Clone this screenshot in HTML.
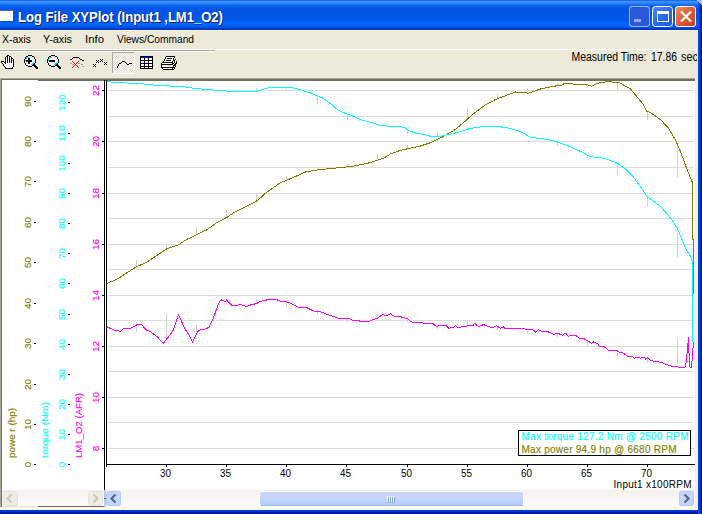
<!DOCTYPE html><html><head><meta charset="utf-8"><title>Log File XYPlot</title><style>html,body{margin:0;padding:0;overflow:hidden;background:#ECE9D8}svg{display:block}text{font-family:"Liberation Sans",sans-serif}.th{stroke-width:0.3px;paint-order:stroke}</style></head><body>
<svg width="702" height="514" viewBox="0 0 702 514">
<defs>
<linearGradient id="tb" x1="0" y1="0" x2="0" y2="30" gradientUnits="userSpaceOnUse">
<stop offset="0" stop-color="#0A46D8"/><stop offset="0.04" stop-color="#3D93FF"/><stop offset="0.1" stop-color="#2D86FA"/>
<stop offset="0.2" stop-color="#0760EE"/><stop offset="0.3" stop-color="#0055E3"/><stop offset="0.65" stop-color="#0056E6"/>
<stop offset="0.78" stop-color="#0066FE"/><stop offset="0.86" stop-color="#0062F8"/><stop offset="0.93" stop-color="#0048DA"/><stop offset="1" stop-color="#0030C0"/>
</linearGradient>
<linearGradient id="rb" x1="698" y1="0" x2="702" y2="0" gradientUnits="userSpaceOnUse">
<stop offset="0" stop-color="#0050F0"/><stop offset="0.45" stop-color="#0040D0"/><stop offset="0.75" stop-color="#00189A"/><stop offset="1" stop-color="#00108A"/>
</linearGradient>
<linearGradient id="bb" x1="0" y1="510" x2="0" y2="514" gradientUnits="userSpaceOnUse">
<stop offset="0" stop-color="#0040EE"/><stop offset="0.45" stop-color="#0030C8"/><stop offset="0.75" stop-color="#00189A"/><stop offset="1" stop-color="#00108A"/>
</linearGradient>
<linearGradient id="closeg" x1="0" y1="0" x2="1" y2="1">
<stop offset="0" stop-color="#F0906A"/><stop offset="0.5" stop-color="#E25A30"/><stop offset="1" stop-color="#C8401E"/>
</linearGradient>
<linearGradient id="btng" x1="0" y1="0" x2="1" y2="1">
<stop offset="0" stop-color="#4C8BF5"/><stop offset="0.5" stop-color="#2A6AEF"/><stop offset="1" stop-color="#1F58E0"/>
</linearGradient>
<linearGradient id="sbg" x1="0" y1="0" x2="0" y2="1">
<stop offset="0" stop-color="#F3F1EC"/><stop offset="1" stop-color="#FEFEFB"/>
</linearGradient>
<linearGradient id="thumbg" x1="0" y1="0" x2="0" y2="1">
<stop offset="0" stop-color="#C9D6FB"/><stop offset="0.6" stop-color="#C4D3FA"/><stop offset="1" stop-color="#B0C8F8"/>
</linearGradient>
<pattern id="dith" width="2" height="2" patternUnits="userSpaceOnUse"><rect width="2" height="2" fill="#F8F7F2"/><rect width="1" height="1" fill="#E2DFD2"/><rect x="1" y="1" width="1" height="1" fill="#E2DFD2"/></pattern>
<clipPath id="plotclip"><rect x="105" y="80" width="590" height="410"/></clipPath>
</defs>
<rect x="0" y="0" width="702" height="514" fill="#ECE9D8" />
<rect x="0" y="0" width="698" height="30" fill="url(#tb)" />
<path d="M690,0 L702,0 L702,30 L698,30 L698,6 Q698,0 690,0 Z" fill="url(#tb)"/>
<rect x="698" y="0" width="4" height="514" fill="url(#rb)" />
<path d="M694,0 Q702,0 702,8 L702,0 Z" fill="#ECE9D8" opacity="0"/>
<rect x="0" y="510" width="698" height="4" fill="url(#bb)" />
<rect x="0" y="507" width="698" height="3" fill="#FBF8EA" />
<path d="M697,0 L702,0 L702,5 L701,5 L701,4 L700,4 L700,3 L699,3 L699,2 L698,2 L698,1 L697,1 Z" fill="#A9B9DA"/>
<rect x="0" y="10" width="12" height="1" fill="#3C6CC8" />
<rect x="0" y="11" width="13" height="10" fill="#FDFDF5" />
<rect x="13" y="10" width="1" height="11" fill="#1A3CA8" opacity="0.5"/>
<rect x="0" y="21" width="14" height="1" fill="#1A3CA8" opacity="0.5"/>
<rect x="12" y="10" width="1" height="1" fill="#FF6A3A" />
<text x="19.1" y="23" font-size="14" fill="#0A1E78" font-weight="bold" text-anchor="start" textLength="204.8" lengthAdjust="spacingAndGlyphs" >Log File XYPlot (Input1 ,LM1_O2)</text>
<text x="18.1" y="22" font-size="14" fill="#FFFFFF" font-weight="bold" text-anchor="start" textLength="204.8" lengthAdjust="spacingAndGlyphs" >Log File XYPlot (Input1 ,LM1_O2)</text>
<rect x="629.5" y="6.5" width="20" height="20" rx="3" fill="url(#btng)" stroke="#FFFFFF" stroke-width="1"/>
<rect x="629.5" y="6.5" width="20" height="20" rx="3" fill="#2A58DA" stroke="#9DB5F0" stroke-width="1"/>
<rect x="634" y="19" width="7" height="3" fill="#9AA8E6" />
<rect x="652.5" y="6.5" width="20" height="20" rx="3" fill="url(#btng)" stroke="#FFFFFF" stroke-width="1"/>
<rect x="657.5" y="11.5" width="11" height="10" fill="none" stroke="#FFFFFF" stroke-width="1"/>
<rect x="657" y="11" width="12" height="3" fill="#FFFFFF" />
<rect x="675.5" y="6.5" width="20" height="20" rx="2.5" fill="url(#closeg)" stroke="#FFFFFF" stroke-width="1"/>
<path d="M681,11.5 L691,21.5 M691,11.5 L681,21.5" stroke="#FFFFFF" stroke-width="2.2" />
<rect x="0" y="30" width="698" height="1" fill="#FAF7E8" />
<text x="2" y="43" font-size="11" fill="#000000" font-weight="normal" text-anchor="start" textLength="29" lengthAdjust="spacingAndGlyphs" >X-axis</text>
<text x="43" y="43" font-size="11" fill="#000000" font-weight="normal" text-anchor="start" textLength="29" lengthAdjust="spacingAndGlyphs" >Y-axis</text>
<text x="85" y="43" font-size="11" fill="#000000" font-weight="normal" text-anchor="start" textLength="19" lengthAdjust="spacingAndGlyphs" >Info</text>
<text x="117" y="43" font-size="11" fill="#000000" font-weight="normal" text-anchor="start" textLength="77" lengthAdjust="spacingAndGlyphs" >Views/Command</text>
<rect x="0" y="49" width="697" height="1" fill="#FFFFFF" />
<rect x="0" y="50" width="215" height="1" fill="#ACA899" />
<rect x="0" y="51" width="215" height="1" fill="#FFFFFF" />
<rect x="7" y="55" width="2" height="1" fill="#000000" />
<rect x="6" y="56" width="2" height="1" fill="#000000" />
<rect x="8" y="56" width="1" height="1" fill="#FFFFFF" />
<rect x="9" y="56" width="2" height="1" fill="#000000" />
<rect x="5" y="57" width="1" height="1" fill="#000000" />
<rect x="6" y="57" width="1" height="1" fill="#FFFFFF" />
<rect x="7" y="57" width="1" height="1" fill="#000000" />
<rect x="8" y="57" width="1" height="1" fill="#FFFFFF" />
<rect x="9" y="57" width="1" height="1" fill="#000000" />
<rect x="10" y="57" width="1" height="1" fill="#FFFFFF" />
<rect x="11" y="57" width="1" height="1" fill="#000000" />
<rect x="5" y="58" width="1" height="1" fill="#000000" />
<rect x="6" y="58" width="1" height="1" fill="#FFFFFF" />
<rect x="7" y="58" width="1" height="1" fill="#000000" />
<rect x="8" y="58" width="1" height="1" fill="#FFFFFF" />
<rect x="9" y="58" width="1" height="1" fill="#000000" />
<rect x="10" y="58" width="1" height="1" fill="#FFFFFF" />
<rect x="11" y="58" width="2" height="1" fill="#000000" />
<rect x="5" y="59" width="1" height="1" fill="#000000" />
<rect x="6" y="59" width="1" height="1" fill="#FFFFFF" />
<rect x="7" y="59" width="1" height="1" fill="#000000" />
<rect x="8" y="59" width="1" height="1" fill="#FFFFFF" />
<rect x="9" y="59" width="1" height="1" fill="#000000" />
<rect x="10" y="59" width="1" height="1" fill="#FFFFFF" />
<rect x="11" y="59" width="1" height="1" fill="#000000" />
<rect x="12" y="59" width="1" height="1" fill="#FFFFFF" />
<rect x="13" y="59" width="1" height="1" fill="#000000" />
<rect x="5" y="60" width="1" height="1" fill="#000000" />
<rect x="6" y="60" width="1" height="1" fill="#FFFFFF" />
<rect x="7" y="60" width="1" height="1" fill="#000000" />
<rect x="8" y="60" width="1" height="1" fill="#FFFFFF" />
<rect x="9" y="60" width="1" height="1" fill="#000000" />
<rect x="10" y="60" width="1" height="1" fill="#FFFFFF" />
<rect x="11" y="60" width="1" height="1" fill="#000000" />
<rect x="12" y="60" width="1" height="1" fill="#FFFFFF" />
<rect x="13" y="60" width="1" height="1" fill="#000000" />
<rect x="1" y="61" width="3" height="1" fill="#000000" />
<rect x="5" y="61" width="1" height="1" fill="#000000" />
<rect x="6" y="61" width="1" height="1" fill="#FFFFFF" />
<rect x="7" y="61" width="1" height="1" fill="#000000" />
<rect x="8" y="61" width="1" height="1" fill="#FFFFFF" />
<rect x="9" y="61" width="1" height="1" fill="#000000" />
<rect x="10" y="61" width="1" height="1" fill="#FFFFFF" />
<rect x="11" y="61" width="1" height="1" fill="#000000" />
<rect x="12" y="61" width="1" height="1" fill="#FFFFFF" />
<rect x="13" y="61" width="1" height="1" fill="#000000" />
<rect x="1" y="62" width="1" height="1" fill="#000000" />
<rect x="2" y="62" width="2" height="1" fill="#FFFFFF" />
<rect x="4" y="62" width="2" height="1" fill="#000000" />
<rect x="6" y="62" width="1" height="1" fill="#FFFFFF" />
<rect x="7" y="62" width="1" height="1" fill="#000000" />
<rect x="8" y="62" width="1" height="1" fill="#FFFFFF" />
<rect x="9" y="62" width="1" height="1" fill="#000000" />
<rect x="10" y="62" width="1" height="1" fill="#FFFFFF" />
<rect x="11" y="62" width="1" height="1" fill="#000000" />
<rect x="12" y="62" width="1" height="1" fill="#FFFFFF" />
<rect x="13" y="62" width="1" height="1" fill="#000000" />
<rect x="2" y="63" width="1" height="1" fill="#000000" />
<rect x="3" y="63" width="2" height="1" fill="#FFFFFF" />
<rect x="5" y="63" width="1" height="1" fill="#000000" />
<rect x="6" y="63" width="7" height="1" fill="#FFFFFF" />
<rect x="13" y="63" width="1" height="1" fill="#000000" />
<rect x="3" y="64" width="1" height="1" fill="#000000" />
<rect x="4" y="64" width="9" height="1" fill="#FFFFFF" />
<rect x="13" y="64" width="1" height="1" fill="#000000" />
<rect x="3" y="65" width="1" height="1" fill="#000000" />
<rect x="4" y="65" width="9" height="1" fill="#FFFFFF" />
<rect x="13" y="65" width="1" height="1" fill="#000000" />
<rect x="4" y="66" width="1" height="1" fill="#000000" />
<rect x="5" y="66" width="8" height="1" fill="#FFFFFF" />
<rect x="13" y="66" width="1" height="1" fill="#000000" />
<rect x="5" y="67" width="1" height="1" fill="#000000" />
<rect x="6" y="67" width="6" height="1" fill="#FFFFFF" />
<rect x="12" y="67" width="1" height="1" fill="#000000" />
<rect x="5" y="68" width="8" height="1" fill="#000000" />
<rect x="28" y="55" width="4" height="1" fill="#000000" />
<rect x="26" y="56" width="2" height="1" fill="#000000" />
<rect x="32" y="56" width="2" height="1" fill="#000000" />
<rect x="25" y="57" width="1" height="1" fill="#000000" />
<rect x="26" y="57" width="3" height="1" fill="#00E0F0" />
<rect x="29" y="57" width="1" height="1" fill="#FFFFFF" />
<rect x="33" y="57" width="1" height="1" fill="#FFFFFF" />
<rect x="34" y="57" width="1" height="1" fill="#000000" />
<rect x="25" y="58" width="1" height="1" fill="#000000" />
<rect x="26" y="58" width="1" height="1" fill="#00E0F0" />
<rect x="27" y="58" width="1" height="1" fill="#FFFFFF" />
<rect x="28" y="58" width="2" height="1" fill="#000000" />
<rect x="30" y="58" width="4" height="1" fill="#FFFFFF" />
<rect x="34" y="58" width="1" height="1" fill="#000000" />
<rect x="24" y="59" width="1" height="1" fill="#000000" />
<rect x="25" y="59" width="1" height="1" fill="#00E0F0" />
<rect x="26" y="59" width="2" height="1" fill="#FFFFFF" />
<rect x="28" y="59" width="2" height="1" fill="#000000" />
<rect x="30" y="59" width="5" height="1" fill="#FFFFFF" />
<rect x="35" y="59" width="1" height="1" fill="#000000" />
<rect x="24" y="60" width="1" height="1" fill="#000000" />
<rect x="25" y="60" width="1" height="1" fill="#00E0F0" />
<rect x="26" y="60" width="6" height="1" fill="#000000" />
<rect x="32" y="60" width="3" height="1" fill="#FFFFFF" />
<rect x="35" y="60" width="1" height="1" fill="#000000" />
<rect x="24" y="61" width="1" height="1" fill="#000000" />
<rect x="25" y="61" width="1" height="1" fill="#FFFFFF" />
<rect x="26" y="61" width="6" height="1" fill="#000000" />
<rect x="32" y="61" width="3" height="1" fill="#FFFFFF" />
<rect x="35" y="61" width="1" height="1" fill="#000000" />
<rect x="24" y="62" width="1" height="1" fill="#000000" />
<rect x="25" y="62" width="3" height="1" fill="#FFFFFF" />
<rect x="28" y="62" width="2" height="1" fill="#000000" />
<rect x="30" y="62" width="3" height="1" fill="#FFFFFF" />
<rect x="33" y="62" width="1" height="1" fill="#00E0F0" />
<rect x="34" y="62" width="1" height="1" fill="#FFFFFF" />
<rect x="35" y="62" width="1" height="1" fill="#000000" />
<rect x="25" y="63" width="1" height="1" fill="#000000" />
<rect x="26" y="63" width="2" height="1" fill="#FFFFFF" />
<rect x="28" y="63" width="2" height="1" fill="#000000" />
<rect x="30" y="63" width="2" height="1" fill="#FFFFFF" />
<rect x="32" y="63" width="2" height="1" fill="#00E0F0" />
<rect x="34" y="63" width="1" height="1" fill="#000000" />
<rect x="25" y="64" width="1" height="1" fill="#000000" />
<rect x="26" y="64" width="5" height="1" fill="#FFFFFF" />
<rect x="31" y="64" width="2" height="1" fill="#00E0F0" />
<rect x="33" y="64" width="2" height="1" fill="#000000" />
<rect x="26" y="65" width="2" height="1" fill="#000000" />
<rect x="32" y="65" width="4" height="1" fill="#000000" />
<rect x="28" y="66" width="4" height="1" fill="#000000" />
<rect x="34" y="66" width="3" height="1" fill="#000000" />
<rect x="35" y="67" width="3" height="1" fill="#000000" />
<rect x="36" y="68" width="2" height="1" fill="#000000" />
<rect x="51" y="55" width="4" height="1" fill="#000000" />
<rect x="49" y="56" width="2" height="1" fill="#000000" />
<rect x="55" y="56" width="2" height="1" fill="#000000" />
<rect x="48" y="57" width="1" height="1" fill="#000000" />
<rect x="49" y="57" width="3" height="1" fill="#00E0F0" />
<rect x="52" y="57" width="1" height="1" fill="#FFFFFF" />
<rect x="56" y="57" width="1" height="1" fill="#FFFFFF" />
<rect x="57" y="57" width="1" height="1" fill="#000000" />
<rect x="48" y="58" width="1" height="1" fill="#000000" />
<rect x="49" y="58" width="1" height="1" fill="#00E0F0" />
<rect x="50" y="58" width="7" height="1" fill="#FFFFFF" />
<rect x="57" y="58" width="1" height="1" fill="#000000" />
<rect x="47" y="59" width="1" height="1" fill="#000000" />
<rect x="48" y="59" width="1" height="1" fill="#00E0F0" />
<rect x="49" y="59" width="9" height="1" fill="#FFFFFF" />
<rect x="58" y="59" width="1" height="1" fill="#000000" />
<rect x="47" y="60" width="1" height="1" fill="#000000" />
<rect x="48" y="60" width="1" height="1" fill="#00E0F0" />
<rect x="49" y="60" width="6" height="1" fill="#000000" />
<rect x="55" y="60" width="3" height="1" fill="#FFFFFF" />
<rect x="58" y="60" width="1" height="1" fill="#000000" />
<rect x="47" y="61" width="1" height="1" fill="#000000" />
<rect x="48" y="61" width="1" height="1" fill="#FFFFFF" />
<rect x="49" y="61" width="6" height="1" fill="#000000" />
<rect x="55" y="61" width="3" height="1" fill="#FFFFFF" />
<rect x="58" y="61" width="1" height="1" fill="#000000" />
<rect x="47" y="62" width="1" height="1" fill="#000000" />
<rect x="48" y="62" width="8" height="1" fill="#FFFFFF" />
<rect x="56" y="62" width="1" height="1" fill="#00E0F0" />
<rect x="57" y="62" width="1" height="1" fill="#FFFFFF" />
<rect x="58" y="62" width="1" height="1" fill="#000000" />
<rect x="48" y="63" width="1" height="1" fill="#000000" />
<rect x="49" y="63" width="6" height="1" fill="#FFFFFF" />
<rect x="55" y="63" width="2" height="1" fill="#00E0F0" />
<rect x="57" y="63" width="1" height="1" fill="#000000" />
<rect x="48" y="64" width="1" height="1" fill="#000000" />
<rect x="49" y="64" width="5" height="1" fill="#FFFFFF" />
<rect x="54" y="64" width="2" height="1" fill="#00E0F0" />
<rect x="56" y="64" width="2" height="1" fill="#000000" />
<rect x="49" y="65" width="2" height="1" fill="#000000" />
<rect x="55" y="65" width="4" height="1" fill="#000000" />
<rect x="51" y="66" width="4" height="1" fill="#000000" />
<rect x="57" y="66" width="3" height="1" fill="#000000" />
<rect x="58" y="67" width="3" height="1" fill="#000000" />
<rect x="59" y="68" width="2" height="1" fill="#000000" />
<rect x="73" y="57" width="6" height="1" fill="#000000" />
<rect x="72" y="58" width="1" height="1" fill="#000000" />
<rect x="79" y="58" width="1" height="1" fill="#000000" />
<rect x="70" y="59" width="2" height="1" fill="#000000" />
<rect x="80" y="59" width="2" height="1" fill="#000000" />
<rect x="82" y="60" width="2" height="1" fill="#000000" />
<rect x="72" y="61" width="1" height="1" fill="#FF0000" />
<rect x="78" y="61" width="1" height="1" fill="#FF0000" />
<rect x="73" y="62" width="1" height="1" fill="#FF0000" />
<rect x="77" y="62" width="1" height="1" fill="#FF0000" />
<rect x="70" y="63" width="2" height="1" fill="#A0A098" />
<rect x="74" y="63" width="1" height="1" fill="#FF0000" />
<rect x="76" y="63" width="1" height="1" fill="#FF0000" />
<rect x="78" y="63" width="2" height="1" fill="#A0A098" />
<rect x="72" y="64" width="2" height="1" fill="#A0A098" />
<rect x="75" y="64" width="1" height="1" fill="#FF0000" />
<rect x="81" y="64" width="2" height="1" fill="#A0A098" />
<rect x="74" y="65" width="1" height="1" fill="#FF0000" />
<rect x="76" y="65" width="1" height="1" fill="#FF0000" />
<rect x="73" y="66" width="1" height="1" fill="#FF0000" />
<rect x="77" y="66" width="1" height="1" fill="#FF0000" />
<rect x="82" y="66" width="2" height="1" fill="#A0A098" />
<rect x="72" y="67" width="1" height="1" fill="#FF0000" />
<rect x="78" y="67" width="1" height="1" fill="#FF0000" />
<rect x="93" y="64" width="1" height="1" fill="#000" />
<rect x="95" y="64" width="1" height="1" fill="#000" />
<rect x="94" y="65" width="1" height="1" fill="#000" />
<rect x="93" y="66" width="1" height="1" fill="#000" />
<rect x="95" y="66" width="1" height="1" fill="#000" />
<rect x="96" y="60" width="1" height="1" fill="#000" />
<rect x="98" y="60" width="1" height="1" fill="#000" />
<rect x="97" y="61" width="1" height="1" fill="#000" />
<rect x="96" y="62" width="1" height="1" fill="#000" />
<rect x="98" y="62" width="1" height="1" fill="#000" />
<rect x="100" y="59" width="1" height="1" fill="#000" />
<rect x="102" y="59" width="1" height="1" fill="#000" />
<rect x="101" y="60" width="1" height="1" fill="#000" />
<rect x="100" y="61" width="1" height="1" fill="#000" />
<rect x="102" y="61" width="1" height="1" fill="#000" />
<rect x="104" y="62" width="1" height="1" fill="#000" />
<rect x="106" y="62" width="1" height="1" fill="#000" />
<rect x="105" y="63" width="1" height="1" fill="#000" />
<rect x="104" y="64" width="1" height="1" fill="#000" />
<rect x="106" y="64" width="1" height="1" fill="#000" />
<rect x="112" y="52" width="23" height="22" fill="url(#dith)" />
<rect x="112" y="52" width="22" height="1" fill="#ACA899" />
<rect x="112" y="52" width="1" height="21" fill="#ACA899" />
<rect x="112" y="73" width="23" height="1" fill="#FFFFFF" />
<rect x="134" y="56" width="1" height="13" fill="#FFFFFF" />
<rect x="122" y="61" width="3" height="1" fill="#000000" />
<rect x="121" y="62" width="1" height="1" fill="#000000" />
<rect x="125" y="62" width="1" height="1" fill="#000000" />
<rect x="119" y="63" width="2" height="1" fill="#000000" />
<rect x="126" y="63" width="1" height="1" fill="#000000" />
<rect x="129" y="63" width="3" height="1" fill="#000000" />
<rect x="118" y="64" width="1" height="1" fill="#000000" />
<rect x="127" y="64" width="2" height="1" fill="#000000" />
<rect x="118" y="65" width="1" height="1" fill="#000000" />
<rect x="117" y="66" width="1" height="1" fill="#000000" />
<rect x="117" y="67" width="1" height="1" fill="#000000" />
<rect x="140" y="56" width="13" height="13" fill="#000" />
<rect x="141" y="57" width="7" height="1" fill="#0000FF" />
<rect x="149" y="57" width="3" height="1" fill="#0000FF" />
<rect x="141" y="58" width="3" height="2" fill="#FFFFFF" />
<rect x="145" y="58" width="3" height="2" fill="#FFFFFF" />
<rect x="149" y="58" width="3" height="2" fill="#FFFFFF" />
<rect x="141" y="61" width="3" height="2" fill="#FFFFFF" />
<rect x="145" y="61" width="3" height="2" fill="#FFFFFF" />
<rect x="149" y="61" width="3" height="2" fill="#FFFFFF" />
<rect x="141" y="64" width="3" height="2" fill="#FFFFFF" />
<rect x="145" y="64" width="3" height="2" fill="#FFFFFF" />
<rect x="149" y="64" width="3" height="2" fill="#FFFFFF" />
<rect x="141" y="67" width="3" height="1" fill="#FFFFFF" />
<rect x="145" y="67" width="3" height="1" fill="#FFFFFF" />
<rect x="149" y="67" width="3" height="1" fill="#FFFFFF" />
<rect x="166" y="56" width="9" height="1" fill="#000000" />
<rect x="165" y="57" width="1" height="1" fill="#000000" />
<rect x="166" y="57" width="8" height="1" fill="#FFFFFF" />
<rect x="174" y="57" width="1" height="1" fill="#000000" />
<rect x="165" y="58" width="1" height="1" fill="#000000" />
<rect x="166" y="58" width="1" height="1" fill="#FFFFFF" />
<rect x="167" y="58" width="5" height="1" fill="#000000" />
<rect x="172" y="58" width="1" height="1" fill="#FFFFFF" />
<rect x="173" y="58" width="1" height="1" fill="#000000" />
<rect x="164" y="59" width="1" height="1" fill="#000000" />
<rect x="165" y="59" width="8" height="1" fill="#FFFFFF" />
<rect x="173" y="59" width="1" height="1" fill="#000000" />
<rect x="174" y="59" width="1" height="1" fill="#FFFFFF" />
<rect x="175" y="59" width="1" height="1" fill="#000000" />
<rect x="164" y="60" width="1" height="1" fill="#000000" />
<rect x="165" y="60" width="1" height="1" fill="#FFFFFF" />
<rect x="166" y="60" width="5" height="1" fill="#000000" />
<rect x="171" y="60" width="2" height="1" fill="#FFFFFF" />
<rect x="173" y="60" width="2" height="1" fill="#000000" />
<rect x="175" y="60" width="1" height="1" fill="#FFFFFF" />
<rect x="163" y="61" width="1" height="1" fill="#000000" />
<rect x="164" y="61" width="8" height="1" fill="#FFFFFF" />
<rect x="172" y="61" width="1" height="1" fill="#000000" />
<rect x="173" y="61" width="1" height="1" fill="#FFFFFF" />
<rect x="174" y="61" width="1" height="1" fill="#000000" />
<rect x="175" y="61" width="1" height="1" fill="#FFFFFF" />
<rect x="176" y="61" width="1" height="1" fill="#000000" />
<rect x="162" y="62" width="11" height="1" fill="#000000" />
<rect x="173" y="62" width="1" height="1" fill="#FFFFFF" />
<rect x="174" y="62" width="1" height="1" fill="#000000" />
<rect x="175" y="62" width="1" height="1" fill="#FFFFFF" />
<rect x="176" y="62" width="1" height="1" fill="#000000" />
<rect x="161" y="63" width="1" height="1" fill="#000000" />
<rect x="162" y="63" width="10" height="1" fill="#FFFFFF" />
<rect x="172" y="63" width="2" height="1" fill="#000000" />
<rect x="174" y="63" width="1" height="1" fill="#FFFFFF" />
<rect x="175" y="63" width="2" height="1" fill="#000000" />
<rect x="161" y="64" width="12" height="1" fill="#000000" />
<rect x="173" y="64" width="1" height="1" fill="#FFFFFF" />
<rect x="174" y="64" width="2" height="1" fill="#000000" />
<rect x="161" y="65" width="1" height="1" fill="#000000" />
<rect x="162" y="65" width="6" height="1" fill="#FFFFFF" />
<rect x="168" y="65" width="3" height="1" fill="#F0E000" />
<rect x="171" y="65" width="2" height="1" fill="#FFFFFF" />
<rect x="173" y="65" width="3" height="1" fill="#000000" />
<rect x="161" y="66" width="1" height="1" fill="#000000" />
<rect x="162" y="66" width="11" height="1" fill="#FFFFFF" />
<rect x="173" y="66" width="1" height="1" fill="#000000" />
<rect x="174" y="66" width="1" height="1" fill="#FFFFFF" />
<rect x="175" y="66" width="1" height="1" fill="#000000" />
<rect x="161" y="67" width="14" height="1" fill="#000000" />
<rect x="162" y="68" width="1" height="1" fill="#000000" />
<rect x="163" y="68" width="9" height="1" fill="#FFFFFF" />
<rect x="172" y="68" width="1" height="1" fill="#000000" />
<rect x="173" y="68" width="1" height="1" fill="#FFFFFF" />
<rect x="174" y="68" width="1" height="1" fill="#000000" />
<rect x="163" y="69" width="11" height="1" fill="#000000" />
<svg x="0" y="0" width="697" height="78" overflow="hidden">
<text x="571.5" y="61" font-size="12" fill="#000000" font-weight="normal" text-anchor="start" textLength="75" lengthAdjust="spacingAndGlyphs" >Measured Time:</text>
<text x="651" y="61" font-size="12" fill="#000000" font-weight="normal" text-anchor="start" textLength="26" lengthAdjust="spacingAndGlyphs" >17.86</text>
<text x="681" y="61" font-size="12" fill="#000000" font-weight="normal" text-anchor="start" textLength="17" lengthAdjust="spacingAndGlyphs" >sec</text>
</svg>
<rect x="0" y="78" width="696" height="1" fill="#ACA899" />
<rect x="0" y="79" width="696" height="1" fill="#716F64" />
<rect x="38" y="80" width="658" height="1" fill="#716F64" />
<rect x="0" y="78" width="1" height="429" fill="#ACA899" />
<rect x="1" y="79" width="1" height="428" fill="#716F64" />
<rect x="2" y="80" width="102" height="410" fill="#FFFFFF" />
<rect x="38" y="80" width="658" height="1" fill="#716F64" />
<rect x="105" y="81" width="590" height="409" fill="#FFFFFF" />
<rect x="695" y="78" width="3" height="432" fill="#F4F1E4" />
<rect x="104" y="80" width="1" height="410" fill="#000000" />
<rect x="108" y="90" width="586" height="1" fill="#DCDCDC" />
<rect x="108" y="116" width="586" height="1" fill="#DCDCDC" />
<rect x="108" y="141" width="586" height="1" fill="#DCDCDC" />
<rect x="108" y="167" width="586" height="1" fill="#DCDCDC" />
<rect x="108" y="193" width="586" height="1" fill="#DCDCDC" />
<rect x="108" y="218" width="586" height="1" fill="#DCDCDC" />
<rect x="108" y="244" width="586" height="1" fill="#DCDCDC" />
<rect x="108" y="269" width="586" height="1" fill="#DCDCDC" />
<rect x="108" y="295" width="586" height="1" fill="#DCDCDC" />
<rect x="108" y="320" width="586" height="1" fill="#DCDCDC" />
<rect x="108" y="346" width="586" height="1" fill="#DCDCDC" />
<rect x="108" y="371" width="586" height="1" fill="#DCDCDC" />
<rect x="108" y="397" width="586" height="1" fill="#DCDCDC" />
<rect x="108" y="422" width="586" height="1" fill="#DCDCDC" />
<rect x="108" y="448" width="586" height="1" fill="#DCDCDC" />
<rect x="106" y="80" width="1" height="387" fill="#000000" />
<rect x="106" y="464" width="589" height="1" fill="#000000" />
<rect x="166" y="465" width="1" height="2" fill="#000" />
<text x="165.5" y="477" font-size="10" fill="#000000" font-weight="normal" text-anchor="middle" textLength="11" lengthAdjust="spacingAndGlyphs" >30</text>
<rect x="226" y="465" width="1" height="2" fill="#000" />
<text x="225.5" y="477" font-size="10" fill="#000000" font-weight="normal" text-anchor="middle" textLength="11" lengthAdjust="spacingAndGlyphs" >35</text>
<rect x="286" y="465" width="1" height="2" fill="#000" />
<text x="285.5" y="477" font-size="10" fill="#000000" font-weight="normal" text-anchor="middle" textLength="11" lengthAdjust="spacingAndGlyphs" >40</text>
<rect x="346" y="465" width="1" height="2" fill="#000" />
<text x="345.5" y="477" font-size="10" fill="#000000" font-weight="normal" text-anchor="middle" textLength="11" lengthAdjust="spacingAndGlyphs" >45</text>
<rect x="407" y="465" width="1" height="2" fill="#000" />
<text x="406.5" y="477" font-size="10" fill="#000000" font-weight="normal" text-anchor="middle" textLength="11" lengthAdjust="spacingAndGlyphs" >50</text>
<rect x="467" y="465" width="1" height="2" fill="#000" />
<text x="466.5" y="477" font-size="10" fill="#000000" font-weight="normal" text-anchor="middle" textLength="11" lengthAdjust="spacingAndGlyphs" >55</text>
<rect x="527" y="465" width="1" height="2" fill="#000" />
<text x="526.5" y="477" font-size="10" fill="#000000" font-weight="normal" text-anchor="middle" textLength="11" lengthAdjust="spacingAndGlyphs" >60</text>
<rect x="587" y="465" width="1" height="2" fill="#000" />
<text x="586.5" y="477" font-size="10" fill="#000000" font-weight="normal" text-anchor="middle" textLength="11" lengthAdjust="spacingAndGlyphs" >65</text>
<rect x="647" y="465" width="1" height="2" fill="#000" />
<text x="646.5" y="477" font-size="10" fill="#000000" font-weight="normal" text-anchor="middle" textLength="11" lengthAdjust="spacingAndGlyphs" >70</text>
<text x="613.5" y="487.5" font-size="10" fill="#000000" font-weight="normal" text-anchor="start" textLength="78" lengthAdjust="spacing" >Input1 x100RPM</text>
<rect x="136" y="82" width="1" height="3" fill="#D0D0D0" />
<rect x="136" y="260" width="1" height="8" fill="#D0D0D0" />
<rect x="136" y="325" width="1" height="7" fill="#D0D0D0" />
<rect x="166" y="84" width="1" height="3" fill="#D0D0D0" />
<rect x="166" y="244" width="1" height="8" fill="#D0D0D0" />
<rect x="166" y="314" width="1" height="23" fill="#D0D0D0" />
<rect x="196" y="227" width="1" height="8" fill="#D0D0D0" />
<rect x="196" y="325" width="1" height="10" fill="#D0D0D0" />
<rect x="226" y="210" width="1" height="8" fill="#D0D0D0" />
<rect x="226" y="300" width="1" height="5" fill="#D0D0D0" />
<rect x="256" y="88" width="1" height="3" fill="#D0D0D0" />
<rect x="256" y="193" width="1" height="7" fill="#D0D0D0" />
<rect x="256" y="299" width="1" height="4" fill="#D0D0D0" />
<rect x="286" y="87" width="1" height="3" fill="#D0D0D0" />
<rect x="286" y="176" width="1" height="8" fill="#D0D0D0" />
<rect x="286" y="302" width="1" height="5" fill="#D0D0D0" />
<rect x="317" y="96" width="1" height="8" fill="#D0D0D0" />
<rect x="317" y="168" width="1" height="2" fill="#D0D0D0" />
<rect x="317" y="311" width="1" height="4" fill="#D0D0D0" />
<rect x="347" y="114" width="1" height="6" fill="#D0D0D0" />
<rect x="347" y="164" width="1" height="3" fill="#D0D0D0" />
<rect x="347" y="318" width="1" height="4" fill="#D0D0D0" />
<rect x="377" y="124" width="1" height="2" fill="#D0D0D0" />
<rect x="377" y="154" width="1" height="6" fill="#D0D0D0" />
<rect x="377" y="313" width="1" height="5" fill="#D0D0D0" />
<rect x="407" y="130" width="1" height="4" fill="#D0D0D0" />
<rect x="407" y="145" width="1" height="4" fill="#D0D0D0" />
<rect x="407" y="318" width="1" height="4" fill="#D0D0D0" />
<rect x="437" y="132" width="1" height="4" fill="#D0D0D0" />
<rect x="437" y="138" width="1" height="5" fill="#D0D0D0" />
<rect x="437" y="325" width="1" height="4" fill="#D0D0D0" />
<rect x="467" y="108" width="1" height="9" fill="#D0D0D0" />
<rect x="467" y="127" width="1" height="4" fill="#D0D0D0" />
<rect x="467" y="321" width="1" height="4" fill="#D0D0D0" />
<rect x="497" y="94" width="1" height="4" fill="#D0D0D0" />
<rect x="497" y="126" width="1" height="2" fill="#D0D0D0" />
<rect x="497" y="326" width="1" height="4" fill="#D0D0D0" />
<rect x="527" y="88" width="1" height="5" fill="#D0D0D0" />
<rect x="527" y="329" width="1" height="4" fill="#D0D0D0" />
<rect x="557" y="143" width="1" height="3" fill="#D0D0D0" />
<rect x="557" y="83" width="1" height="3" fill="#D0D0D0" />
<rect x="557" y="334" width="1" height="3" fill="#D0D0D0" />
<rect x="587" y="84" width="1" height="3" fill="#D0D0D0" />
<rect x="587" y="155" width="1" height="3" fill="#D0D0D0" />
<rect x="587" y="341" width="1" height="5" fill="#D0D0D0" />
<rect x="617" y="83" width="1" height="7" fill="#D0D0D0" />
<rect x="617" y="163" width="1" height="12" fill="#D0D0D0" />
<rect x="617" y="353" width="1" height="3" fill="#D0D0D0" />
<rect x="647" y="111" width="1" height="9" fill="#D0D0D0" />
<rect x="647" y="196" width="1" height="11" fill="#D0D0D0" />
<rect x="647" y="358" width="1" height="5" fill="#D0D0D0" />
<rect x="677" y="145" width="1" height="32" fill="#D0D0D0" />
<rect x="677" y="232" width="1" height="25" fill="#D0D0D0" />
<rect x="677" y="337" width="1" height="27" fill="#D0D0D0" />
<g clip-path="url(#plotclip)" fill="none" stroke-width="1" stroke-linejoin="round" shape-rendering="crispEdges">
<polyline points="107.1,326.8 113.5,329.9 120.5,331.3 123.5,328.5 130.5,328.2 137.5,324.5 141.5,324.6 146.5,330.2 150.5,331.6 157.5,337 160.5,340.6 163.5,343 169.5,335.6 173.5,329.9 178.5,314.5 184.5,328.2 189.5,335.6 192.5,342.4 197.5,332 200.5,329.4 206.5,328.9 209.5,326.3 213.5,317.8 216.5,309.2 219.5,301.4 221.5,300 225.5,301.4 226.5,300 231.5,305.2 237.5,305.2 239.5,304.2 246.5,306.4 250.5,305 256.5,303.5 260.5,301.4 265.5,300.2 270.5,299.2 276.5,299.5 280.5,301.4 286.5,301.7 290.5,303.2 298.5,307.1 306.5,307.5 313.5,311 320.5,311.8 330.5,315.6 340.5,318.8 348.5,318.2 353.5,321 357.5,320.3 362.5,322 368.5,321.6 373.5,319.5 377.5,318.2 382.5,314.6 386.5,316 390.5,313.5 393.5,316 400.5,316.7 407.5,318.8 411.5,322 420.5,322.7 428.5,323.8 432.5,323.1 436.5,326.7 440.5,325.2 445.5,325.2 448.5,328.2 453.5,327.4 455.5,325.6 457.5,327.4 463.5,326.7 468.5,325.6 473.5,325.2 474.5,323.1 478.5,326.7 483.5,324.6 488.5,326.7 492.5,327.8 496.5,325.6 500.5,328.2 503.5,326.7 504.5,328.4 523.5,328.4 527.5,329.9 532.5,329.3 535.5,332 538.5,329.5 542.5,332 547.5,331.6 553.5,334.2 558.5,333.5 562.5,335.3 565.5,333.1 568.5,336.3 570.5,335.2 575.5,335.2 579.5,338.2 583.5,338.5 587.5,340.7 591.5,343.5 593.5,342 597.5,343.5 599.5,346.4 604.5,347 608.5,350.2 616.5,350.3 619.5,352.5 622.5,352.5 627.5,356.3 632.5,356.8 634.5,358.2 636.5,357.3 640.5,358.2 644.5,357.3 645.5,359.2 647.5,357.3 650.5,360.6 657.5,361.6 662.5,362.7 665.5,364.4 667.5,364.9 670.5,366 676.5,366 679.5,367.8 685.5,367 686.5,360 688.5,338 689.5,367 691.5,367 692.5,354.7 693.5,342.4" stroke="#FF00FF"/>
<polyline points="107.1,283.3 116.5,279.5 136.5,266.7 146.5,262.4 166.5,249 178.5,244.9 186.5,239.5 206.5,230 216.5,222.9 227.5,217 233.5,212.8 250.5,204.3 257.5,200.5 266.5,192.4 280.5,182.7 293.5,177.4 305.5,172 320.5,169.3 330.5,168.8 340.5,167.4 350.5,166.7 368.5,163 383.5,158.2 390.5,153.9 400.5,150.3 420.5,146 430.5,142.7 442.5,137 455.5,129.4 465.5,120.9 472.5,114.5 485.5,104.8 495.5,99.5 505.5,95.7 515.5,92 528.5,93.1 540.5,89 548.5,87.4 555.5,86 561.5,85.3 564.5,83.4 572.5,83.4 573.5,84.5 586.5,84.5 591.5,86.3 597.5,83.4 602.5,82.4 608.5,81.4 614.5,82.4 620.5,83.1 625.5,86.3 630.5,89 643.5,104.6 646.5,111 650.5,112.5 660.5,119.6 668.5,128.2 675.5,140 680.5,151.7 686.5,167.8 691.5,180.6 692.5,182.3 692.5,239.5 693.5,239.5 693.5,294" stroke="#808000"/>
<polyline points="107.1,81 110.5,82 126.5,82 126.5,83 143.5,83 143.5,84 152.5,84 152.5,85 168.5,85 168.5,86 184.5,86 184.5,87 191.5,87 191.5,88 200.5,89 212.5,90 225.5,91 257.5,91 265.5,88.5 272.5,87 288.5,87 297.5,89 310.5,93 322.5,98 332.5,105 337.5,109.7 345.5,113.5 352.5,116 360.5,119.5 372.5,122.8 380.5,125.4 390.5,126.4 400.5,126.8 404.5,127.8 410.5,131.3 415.5,133 425.5,134.9 430.5,136.3 440.5,136.3 455.5,133 470.5,128.4 480.5,126.9 490.5,126.2 505.5,127.3 520.5,131.5 530.5,137.3 540.5,138.5 546.5,139.5 551.5,140.4 557.5,142 567.5,145.6 575.5,149.2 583.5,152.8 590.5,156.8 600.5,157.7 606.5,159.2 617.5,163.4 625.5,169.1 633.5,177 637.5,182.9 641.5,188.1 644.5,192.5 647.5,196.9 653.5,201.2 660.5,206.5 667.5,214.3 673.5,222.2 678.5,231 683.5,243.2 686.5,250 690.5,256.3 692.5,262 692.5,341.6" stroke="#00FFFF"/>
</g>
<rect x="518" y="430" width="173" height="26" fill="#000000" />
<rect x="519" y="431" width="171" height="24" fill="#FFFFFF" />
<text x="521.5" y="440" font-size="10" fill="#00FFFF" font-weight="normal" text-anchor="start" textLength="167" lengthAdjust="spacing" stroke="#00FFFF" stroke-width="0.15">Max torque 127.2 Nm @ 2500 RPM</text>
<text x="521.5" y="453" font-size="10" fill="#808000" font-weight="normal" text-anchor="start" textLength="155" lengthAdjust="spacing" stroke="#808000" stroke-width="0.15">Max power 94.9 hp @ 6680 RPM</text>
<rect x="34" y="464" width="2" height="1" fill="#000" />
<text transform="translate(31.1,464.5) rotate(-90)" font-size="9.6" fill="#808000" stroke="#808000" stroke-width="0.15" text-anchor="middle" textLength="5.5" lengthAdjust="spacingAndGlyphs">0</text>
<rect x="34" y="424" width="2" height="1" fill="#000" />
<text transform="translate(31.1,424.5) rotate(-90)" font-size="9.6" fill="#808000" stroke="#808000" stroke-width="0.15" text-anchor="middle" textLength="11" lengthAdjust="spacingAndGlyphs">10</text>
<rect x="34" y="384" width="2" height="1" fill="#000" />
<text transform="translate(31.1,384.5) rotate(-90)" font-size="9.6" fill="#808000" stroke="#808000" stroke-width="0.15" text-anchor="middle" textLength="11" lengthAdjust="spacingAndGlyphs">20</text>
<rect x="34" y="343" width="2" height="1" fill="#000" />
<text transform="translate(31.1,343.5) rotate(-90)" font-size="9.6" fill="#808000" stroke="#808000" stroke-width="0.15" text-anchor="middle" textLength="11" lengthAdjust="spacingAndGlyphs">30</text>
<rect x="34" y="303" width="2" height="1" fill="#000" />
<text transform="translate(31.1,303.5) rotate(-90)" font-size="9.6" fill="#808000" stroke="#808000" stroke-width="0.15" text-anchor="middle" textLength="11" lengthAdjust="spacingAndGlyphs">40</text>
<rect x="34" y="262" width="2" height="1" fill="#000" />
<text transform="translate(31.1,262.5) rotate(-90)" font-size="9.6" fill="#808000" stroke="#808000" stroke-width="0.15" text-anchor="middle" textLength="11" lengthAdjust="spacingAndGlyphs">50</text>
<rect x="34" y="222" width="2" height="1" fill="#000" />
<text transform="translate(31.1,222.5) rotate(-90)" font-size="9.6" fill="#808000" stroke="#808000" stroke-width="0.15" text-anchor="middle" textLength="11" lengthAdjust="spacingAndGlyphs">60</text>
<rect x="34" y="181" width="2" height="1" fill="#000" />
<text transform="translate(31.1,181.5) rotate(-90)" font-size="9.6" fill="#808000" stroke="#808000" stroke-width="0.15" text-anchor="middle" textLength="11" lengthAdjust="spacingAndGlyphs">70</text>
<rect x="34" y="141" width="2" height="1" fill="#000" />
<text transform="translate(31.1,141.5) rotate(-90)" font-size="9.6" fill="#808000" stroke="#808000" stroke-width="0.15" text-anchor="middle" textLength="11" lengthAdjust="spacingAndGlyphs">80</text>
<rect x="34" y="101" width="2" height="1" fill="#000" />
<text transform="translate(31.1,101.5) rotate(-90)" font-size="9.6" fill="#808000" stroke="#808000" stroke-width="0.15" text-anchor="middle" textLength="11" lengthAdjust="spacingAndGlyphs">90</text>
<rect x="68" y="464" width="2" height="1" fill="#000" />
<text transform="translate(65.1,464.5) rotate(-90)" font-size="9.6" fill="#00FFFF" stroke="#00FFFF" stroke-width="0.15" text-anchor="middle" textLength="5.5" lengthAdjust="spacingAndGlyphs">0</text>
<rect x="68" y="434" width="2" height="1" fill="#000" />
<text transform="translate(65.1,434.5) rotate(-90)" font-size="9.6" fill="#00FFFF" stroke="#00FFFF" stroke-width="0.15" text-anchor="middle" textLength="11" lengthAdjust="spacingAndGlyphs">10</text>
<rect x="68" y="404" width="2" height="1" fill="#000" />
<text transform="translate(65.1,404.5) rotate(-90)" font-size="9.6" fill="#00FFFF" stroke="#00FFFF" stroke-width="0.15" text-anchor="middle" textLength="11" lengthAdjust="spacingAndGlyphs">20</text>
<rect x="68" y="374" width="2" height="1" fill="#000" />
<text transform="translate(65.1,374.5) rotate(-90)" font-size="9.6" fill="#00FFFF" stroke="#00FFFF" stroke-width="0.15" text-anchor="middle" textLength="11" lengthAdjust="spacingAndGlyphs">30</text>
<rect x="68" y="344" width="2" height="1" fill="#000" />
<text transform="translate(65.1,344.5) rotate(-90)" font-size="9.6" fill="#00FFFF" stroke="#00FFFF" stroke-width="0.15" text-anchor="middle" textLength="11" lengthAdjust="spacingAndGlyphs">40</text>
<rect x="68" y="314" width="2" height="1" fill="#000" />
<text transform="translate(65.1,314.5) rotate(-90)" font-size="9.6" fill="#00FFFF" stroke="#00FFFF" stroke-width="0.15" text-anchor="middle" textLength="11" lengthAdjust="spacingAndGlyphs">50</text>
<rect x="68" y="283" width="2" height="1" fill="#000" />
<text transform="translate(65.1,283.5) rotate(-90)" font-size="9.6" fill="#00FFFF" stroke="#00FFFF" stroke-width="0.15" text-anchor="middle" textLength="11" lengthAdjust="spacingAndGlyphs">60</text>
<rect x="68" y="253" width="2" height="1" fill="#000" />
<text transform="translate(65.1,253.5) rotate(-90)" font-size="9.6" fill="#00FFFF" stroke="#00FFFF" stroke-width="0.15" text-anchor="middle" textLength="11" lengthAdjust="spacingAndGlyphs">70</text>
<rect x="68" y="223" width="2" height="1" fill="#000" />
<text transform="translate(65.1,223.5) rotate(-90)" font-size="9.6" fill="#00FFFF" stroke="#00FFFF" stroke-width="0.15" text-anchor="middle" textLength="11" lengthAdjust="spacingAndGlyphs">80</text>
<rect x="68" y="193" width="2" height="1" fill="#000" />
<text transform="translate(65.1,193.5) rotate(-90)" font-size="9.6" fill="#00FFFF" stroke="#00FFFF" stroke-width="0.15" text-anchor="middle" textLength="11" lengthAdjust="spacingAndGlyphs">90</text>
<rect x="68" y="163" width="2" height="1" fill="#000" />
<text transform="translate(65.1,163.5) rotate(-90)" font-size="9.6" fill="#00FFFF" stroke="#00FFFF" stroke-width="0.15" text-anchor="middle" textLength="16.5" lengthAdjust="spacingAndGlyphs">100</text>
<rect x="68" y="133" width="2" height="1" fill="#000" />
<text transform="translate(65.1,133.5) rotate(-90)" font-size="9.6" fill="#00FFFF" stroke="#00FFFF" stroke-width="0.15" text-anchor="middle" textLength="16.5" lengthAdjust="spacingAndGlyphs">110</text>
<rect x="68" y="102" width="2" height="1" fill="#000" />
<text transform="translate(65.1,102.5) rotate(-90)" font-size="9.6" fill="#00FFFF" stroke="#00FFFF" stroke-width="0.15" text-anchor="middle" textLength="16.5" lengthAdjust="spacingAndGlyphs">120</text>
<rect x="102" y="448" width="2" height="1" fill="#000" />
<text transform="translate(99.1,448.5) rotate(-90)" font-size="9.6" fill="#FF00FF" stroke="#FF00FF" stroke-width="0.15" text-anchor="middle" textLength="5.5" lengthAdjust="spacingAndGlyphs">8</text>
<rect x="102" y="397" width="2" height="1" fill="#000" />
<text transform="translate(99.1,397.5) rotate(-90)" font-size="9.6" fill="#FF00FF" stroke="#FF00FF" stroke-width="0.15" text-anchor="middle" textLength="11" lengthAdjust="spacingAndGlyphs">10</text>
<rect x="102" y="346" width="2" height="1" fill="#000" />
<text transform="translate(99.1,346.5) rotate(-90)" font-size="9.6" fill="#FF00FF" stroke="#FF00FF" stroke-width="0.15" text-anchor="middle" textLength="11" lengthAdjust="spacingAndGlyphs">12</text>
<rect x="102" y="295" width="2" height="1" fill="#000" />
<text transform="translate(99.1,295.5) rotate(-90)" font-size="9.6" fill="#FF00FF" stroke="#FF00FF" stroke-width="0.15" text-anchor="middle" textLength="11" lengthAdjust="spacingAndGlyphs">14</text>
<rect x="102" y="244" width="2" height="1" fill="#000" />
<text transform="translate(99.1,244.5) rotate(-90)" font-size="9.6" fill="#FF00FF" stroke="#FF00FF" stroke-width="0.15" text-anchor="middle" textLength="11" lengthAdjust="spacingAndGlyphs">16</text>
<rect x="102" y="193" width="2" height="1" fill="#000" />
<text transform="translate(99.1,193.5) rotate(-90)" font-size="9.6" fill="#FF00FF" stroke="#FF00FF" stroke-width="0.15" text-anchor="middle" textLength="11" lengthAdjust="spacingAndGlyphs">18</text>
<rect x="102" y="141" width="2" height="1" fill="#000" />
<text transform="translate(99.1,141.5) rotate(-90)" font-size="9.6" fill="#FF00FF" stroke="#FF00FF" stroke-width="0.15" text-anchor="middle" textLength="11" lengthAdjust="spacingAndGlyphs">20</text>
<rect x="102" y="90" width="2" height="1" fill="#000" />
<text transform="translate(99.1,90.5) rotate(-90)" font-size="9.6" fill="#FF00FF" stroke="#FF00FF" stroke-width="0.15" text-anchor="middle" textLength="11" lengthAdjust="spacingAndGlyphs">22</text>
<text transform="translate(14.6,458) rotate(-90)" font-size="9.5" fill="#808000" stroke="#808000" stroke-width="0.15" textLength="50" lengthAdjust="spacingAndGlyphs">powe r (hp)</text>
<text transform="translate(48.2,458) rotate(-90)" font-size="9.5" fill="#00FFFF" stroke="#00FFFF" stroke-width="0.15" textLength="56" lengthAdjust="spacingAndGlyphs">torque (Nm)</text>
<text transform="translate(82,458) rotate(-90)" font-size="9.5" fill="#FF00FF" stroke="#FF00FF" stroke-width="0.15" textLength="65" lengthAdjust="spacingAndGlyphs">LM1_O2 (AFR)</text>
<rect x="2" y="490" width="102" height="17" fill="url(#sbg)" />
<rect x="3.5" y="491.5" width="14" height="14" rx="2" fill="#EEEDE5" stroke="#E6E4DA" stroke-width="1"/>
<path d="M11.5,494.5 L7.5,498.5 L11.5,502.5" stroke="#C9C7BA" stroke-width="2" fill="none"/>
<rect x="18" y="497" width="1" height="9" fill="#FFFFFF" />
<rect x="88.5" y="491.5" width="14" height="14" rx="2" fill="#EEEDE5" stroke="#E6E4DA" stroke-width="1"/>
<path d="M93.5,494.5 L97.5,498.5 L93.5,502.5" stroke="#C9C7BA" stroke-width="2" fill="none"/>
<rect x="2" y="506" width="36" height="1" fill="#E6E4D8" />
<rect x="38" y="506" width="67" height="1" fill="#716F64" />
<rect x="105" y="490" width="590" height="17" fill="url(#sbg)" />
<rect x="104" y="490" width="2" height="17" fill="#B8CCF6" />
<rect x="104" y="498" width="2" height="1" fill="#4D6185" />
<rect x="106.5" y="491.5" width="14" height="14" rx="2" fill="#C6D5FB" stroke="#B4C8F6" stroke-width="1"/>
<path d="M115.5,494.5 L111.5,498.5 L115.5,502.5" stroke="#4D6185" stroke-width="2" fill="none"/>
<rect x="679.5" y="491.5" width="14" height="14" rx="2" fill="#C6D5FB" stroke="#B4C8F6" stroke-width="1"/>
<path d="M684.5,494.5 L688.5,498.5 L684.5,502.5" stroke="#4D6185" stroke-width="2" fill="none"/>
<rect x="259.5" y="491.5" width="264" height="14" rx="2" fill="url(#thumbg)" stroke="#FFFFFF" stroke-width="1"/>
<rect x="261" y="505" width="262" height="1" fill="#9FB5E8" />
<rect x="387" y="496" width="1" height="6" fill="#FFFFFF" />
<rect x="388" y="497" width="1" height="6" fill="#8AA6EA" />
<rect x="389" y="496" width="1" height="6" fill="#FFFFFF" />
<rect x="390" y="497" width="1" height="6" fill="#8AA6EA" />
<rect x="391" y="496" width="1" height="6" fill="#FFFFFF" />
<rect x="392" y="497" width="1" height="6" fill="#8AA6EA" />
<rect x="393" y="496" width="1" height="6" fill="#FFFFFF" />
<rect x="394" y="497" width="1" height="6" fill="#8AA6EA" />
</svg></body></html>
